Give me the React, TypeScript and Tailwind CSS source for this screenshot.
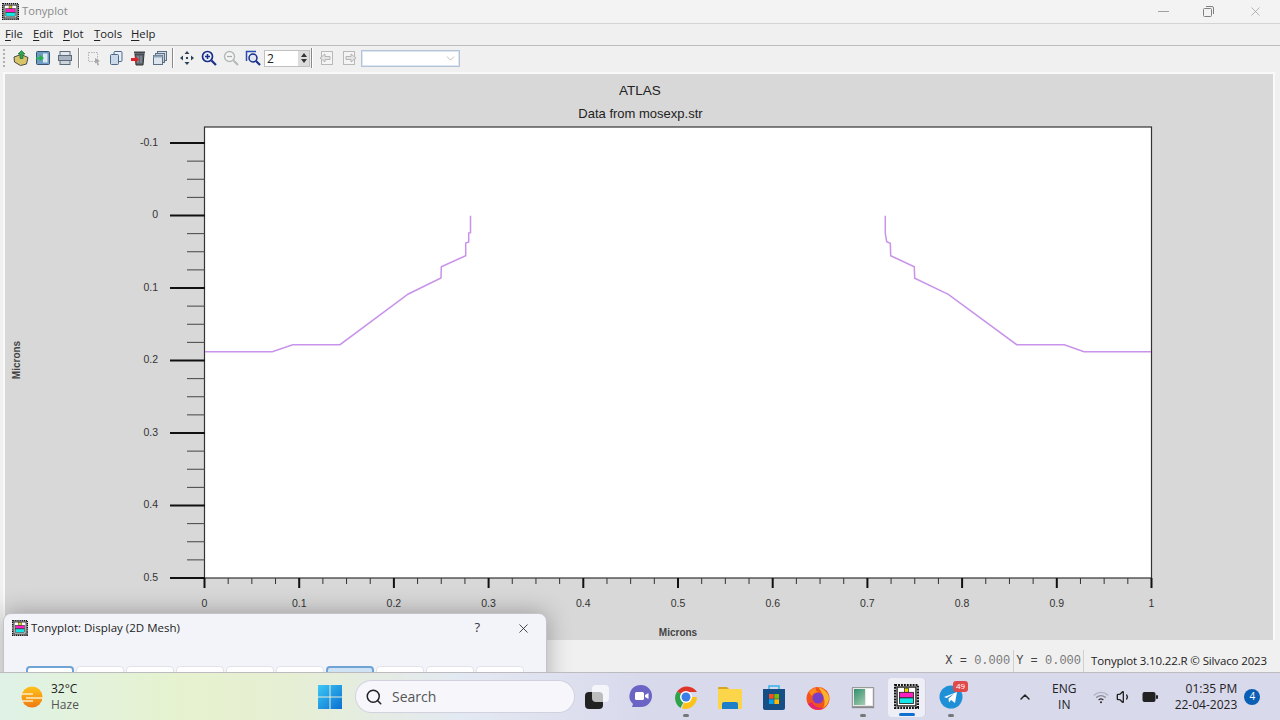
import React from 'react';
import { ChevronDown, ChevronUp, Search, Volume1, X } from 'lucide-react';

const TonyIcon = ({ size = 16 }: { size?: number }) => (
  <svg width={size} height={size} viewBox="0 0 18 18">
    <rect x="0.8" y="0.8" width="16.4" height="16.4" fill="#fff" stroke="#111" strokeWidth="1.6" strokeDasharray="1.4 0.7" />
    <rect x="2.200" y="2.200" width="13.600" height="13.600" fill="#fff" stroke="#222" strokeWidth="1" />
    <rect x="7.5" y="3" width="3" height="3" fill="#e8d400" stroke="#222" strokeWidth="0.5" />
    <rect x="4" y="6" width="10" height="4" fill="#ff1fc0" stroke="#222" strokeWidth="0.6" />
    <rect x="4" y="10" width="10" height="4" fill="#12e6e6" stroke="#222" strokeWidth="0.6" />
  </svg>
);

const toolIcons: React.ReactNode[] = [
  <g key="open">
    <path d="M1 7l7-2.500 7 3-1.500 6.500-6 1.500L1.500 12z" fill="#d8c56a" stroke="#4a4a4a" />
    <path d="M8.500 0.500l3.500 3.500H10v4.500H7V4H5z" fill="#2ea84a" stroke="#1d5c2c" strokeWidth="0.6" />
  </g>,
  <g key="import">
    <rect x="1.500" y="1.500" width="13" height="13" rx="1" fill="#6f9cc4" stroke="#35536e" />
    <rect x="8" y="3.500" width="4.500" height="9" fill="#dbe8f2" />
    <path d="M1 7.500h3.500V4.500l4.500 3.500-4.500 3.500V9H1z" fill="#22b24c" />
  </g>,
  <g key="print">
    <rect x="3" y="1.500" width="10" height="4" fill="#e3e6ea" stroke="#5b6b7c" />
    <rect x="1.500" y="5.500" width="13" height="5" fill="#a9b4c0" stroke="#5b6b7c" />
    <rect x="3" y="10.500" width="10" height="4" fill="#ccd3da" stroke="#5b6b7c" />
  </g>,
  <g key="select">
    <rect x="2.500" y="2.500" width="9" height="9" fill="none" stroke="#b5b5b5" strokeDasharray="1.500 1" />
    <path d="M9 8l5 3-2 1 1 3-1.500 0.500-1-3-1.500 1z" fill="#a8a8a8" />
  </g>,
  <g key="copy">
    <rect x="6" y="1.500" width="8" height="10" rx="1" fill="#e8eef5" stroke="#4c6a88" />
    <rect x="2.500" y="4.500" width="8" height="10" rx="1" fill="#c9d9e8" stroke="#4c6a88" />
  </g>,
  <g key="delete">
    <path d="M5 4h9l-1 11H6z" fill="#5d6670" stroke="#333" />
    <path d="M8 6v7M11 6v7" stroke="#aab2ba" strokeWidth="0.8" />
    <rect x="4" y="1.500" width="11" height="2" fill="#3f454b" />
    <path d="M1 8h4V6l4 3.500L5 13v-2H1z" fill="#d8232a" />
  </g>,
  <g key="cascade">
    <rect x="5.500" y="1.500" width="9" height="9" fill="#d6dde5" stroke="#5b6f84" />
    <rect x="3.500" y="3.500" width="9" height="9" fill="#c3cfdb" stroke="#5b6f84" />
    <rect x="1.500" y="5.500" width="9" height="9" fill="#dde6ee" stroke="#5b6f84" />
    <rect x="1.500" y="5.500" width="9" height="2" fill="#8aa3bb" />
  </g>,
  <g key="move" fill="#2c4258">
    <path d="M8 1l2.500 3h-5zM8 15l-2.500-3h5zM1 8l3-2.500v5zM15 8l-3 2.500v-5z" />
    <rect x="7" y="7" width="2" height="2" />
  </g>,
  <g key="zoomin">
    <circle cx="6.500" cy="6.500" r="5" fill="#e8eef8" stroke="#1b2f8a" strokeWidth="1.700" />
    <path d="M4 6.500h5M6.500 4v5" stroke="#1b2f8a" strokeWidth="1.500" />
    <path d="M10.500 10.500l4.500 4.500" stroke="#1b2f8a" strokeWidth="2.200" />
  </g>,
  <g key="zoomout">
    <circle cx="6.500" cy="6.500" r="5" fill="#f4f4f4" stroke="#b4b8b8" strokeWidth="1.400" />
    <path d="M4 6.500h5" stroke="#a8acac" strokeWidth="1.300" />
    <path d="M10.500 10.500l4.500 4.500" stroke="#b4b8b8" strokeWidth="2" />
  </g>,
  <g key="zoombox">
    <path d="M1.500 11V1.500H11" fill="none" stroke="#2a4bb0" strokeWidth="1.500" />
    <circle cx="8" cy="8" r="4" fill="#dfe6f4" stroke="#1b2f8a" strokeWidth="1.500" />
    <path d="M11 11l4 4" stroke="#1b2f8a" strokeWidth="2.200" />
  </g>,
];

const PageArrow = ({ flip }: { flip?: boolean }) => (
  <svg width="16" height="16" viewBox="0 0 16 16" className={flip ? '-scale-x-100' : ''}>
    <rect x="2.500" y="1.500" width="11" height="13" fill="#f4f4f4" stroke="#b9b9b9" />
    <path d="M1 8l5-4v2.500h5v3H6V12z" fill="#e4e4e4" stroke="#a8a8a8" strokeWidth="0.800" />
  </svg>
);

const ToolButton = ({ icon }: { icon: React.ReactNode }) => (
  <div className="flex h-[22px] w-[22px] items-center justify-center">
    <svg width="16" height="16" viewBox="0 0 16 16">{icon}</svg>
  </div>
);

const ToolSep = ({ className }: { className: string }) => (
  <div className={`h-[20px] w-[2px] border-r border-white bg-[#8a8a8a] ${className}`} />
);

const menus = ['File', 'Edit', 'Plot', 'Tools', 'Help'];
const menuGaps = ['w-[28px]', 'w-[30px]', 'w-[31px]', 'w-[37px]', 'w-[30px]'];

const yMajor = [
  { label: '-0.1', y: 143 },
  { label: '0', y: 215.5 },
  { label: '0.1', y: 288 },
  { label: '0.2', y: 360.5 },
  { label: '0.3', y: 433 },
  { label: '0.4', y: 505.5 },
  { label: '0.5', y: 578 },
];
const xLabels = ['0', '0.1', '0.2', '0.3', '0.4', '0.5', '0.6', '0.7', '0.8', '0.9', '1'];

const leftCurve =
  '205,351.7 272.3,351.7 292.7,344.7 340,344.7 408.3,294 441,278 441.3,266.7 465.7,255.7 465.7,243 468.7,242 468.7,233 470.5,232.7 470.5,215.7';
const rightCurve =
  '885.3,215.7 885.3,233.3 886.7,241.7 890.3,243.3 890.7,255.7 914.3,266.7 914.7,278.3 948.3,294.3 1016.7,344.7 1064.3,344.7 1084,351.7 1151,351.7';

const Chart = () => (
  <svg width="1268" height="566" viewBox="5 74 1268 566" className="block font-['Liberation_Sans',sans-serif]">
    <text x="640" y="95" textAnchor="middle" className="fill-[#222] text-[13.5px]">ATLAS</text>
    <text x="640.5" y="118" textAnchor="middle" className="fill-[#222] text-[13px]">Data from mosexp.str</text>
    <rect x="204.5" y="127" width="947" height="451" fill="#fff" stroke="#333" strokeWidth="1.200" />

    {yMajor.map((t) => (
      <g key={t.label}>
        <line x1="170" x2="205" y1={t.y} y2={t.y} stroke="#111" strokeWidth="2" />
        <text x="158" y={t.y + 2.5} textAnchor="end" className="fill-[#333] text-[10.5px]">{t.label}</text>
      </g>
    ))}
    {Array.from({ length: 24 }, (_, i) => 143 + i * 18.125)
      .filter((_, i) => i % 4 !== 0)
      .map((y) => (
        <line key={y} x1="187" x2="205" y1={y} y2={y} stroke="#444" strokeWidth="1" />
      ))}

    {xLabels.map((label, i) => {
      const x = 204.5 + i * 94.7;
      return (
        <g key={label}>
          <line x1={x} x2={x} y1="578" y2="588" stroke="#111" strokeWidth="2" />
          <text x={x} y="607" textAnchor="middle" className="fill-[#333] text-[10.5px]">{label}</text>
        </g>
      );
    })}
    {Array.from({ length: 40 }, (_, i) => 204.5 + i * 23.675)
      .filter((_, i) => i % 4 !== 0)
      .map((x) => (
        <line key={x} x1={x} x2={x} y1="578" y2="584" stroke="#333" strokeWidth="1" />
      ))}

    <polyline points={leftCurve} fill="none" stroke="#c893ea" strokeWidth="1.500" />
    <polyline points={rightCurve} fill="none" stroke="#c893ea" strokeWidth="1.500" />

    <text x="678" y="635.500" textAnchor="middle" className="fill-[#444] text-[10px] font-bold">Microns</text>
    <text transform="translate(19.500 360) rotate(-90)" textAnchor="middle" className="fill-[#444] text-[10px] font-bold">Microns</text>
  </svg>
);

const AppSlot = ({ children, dot, active }: { children: React.ReactNode; dot?: boolean; active?: boolean }) => (
  <div className="relative flex h-[48px] w-[44.25px] items-center justify-center">
    {active && (
      <div className="absolute top-[5px] left-[3px] h-[39px] w-[37px] rounded bg-[#eeeef6] shadow-[1px_0_0_#cfcfe0]" />
    )}
    <div className="relative">{children}</div>
    {dot && <div className="absolute bottom-[4px] h-[3px] w-[6px] rounded-full bg-[#777]" />}
    {active && <div className="absolute bottom-[5px] h-[3px] w-[16px] rounded-full bg-[#0f6fd0]" />}
  </div>
);

const Taskbar = () => (
  <div className="relative z-20 flex h-[48px] items-center border-t border-[#bcbcc0] bg-[linear-gradient(90deg,#dff2e6_0%,#e6f2cf_14%,#e6efd2_22%,#e3e9f2_36%,#d9d9ec_50%,#d9d9ec_100%)] font-['Open_Sans',sans-serif]">
    <div className="flex w-[318px] items-center pl-[20px]">
      <svg width="24" height="24" viewBox="0 0 24 24">
        <defs>
          <linearGradient id="sun" x1="0" y1="0" x2="0" y2="1">
            <stop offset="0" stopColor="#ffc21a" />
            <stop offset="1" stopColor="#ef7a12" />
          </linearGradient>
        </defs>
        <circle cx="12" cy="12" r="10.500" fill="url(#sun)" />
        <path d="M0 9h13M6 13h18M1 16h12" stroke="#fbeec8" strokeWidth="1.300" />
      </svg>
      <div className="ml-[7px] flex flex-col text-[12px] leading-[16px]">
        <span className="text-[#222]">32°C</span>
        <span className="text-[#555]">Haze</span>
      </div>
    </div>

    <svg width="24" height="24" viewBox="0 0 24 24" className="mr-[14px]">
      <defs>
        <linearGradient id="win" x1="0" y1="0" x2="1" y2="1">
          <stop offset="0" stopColor="#3cc8f5" />
          <stop offset="1" stopColor="#0a6fd0" />
        </linearGradient>
      </defs>
      <path d="M0 0h11.500v11.500H0zM12.500 0H24v11.500H12.500zM0 12.500h11.500V24H0zM12.500 12.500H24V24H12.500z" fill="url(#win)" />
    </svg>

    <div className="flex h-[31px] w-[218px] items-center rounded-full bg-[#f6f6fb] pl-[9px] shadow-[0_0_0_1px_#d2d2de]">
      <Search size={18} strokeWidth={2} className="text-[#222]" />
      <span className="ml-[9px] text-[14px] text-[#555]">Search</span>
    </div>

    <div className="ml-[1px] flex">
      <AppSlot>
        <div className="relative h-[24px] w-[24px]">
          <div className="absolute bottom-0 left-0 h-[17px] w-[18px] rounded-sm bg-[#222]" />
          <div className="absolute top-0 right-0 h-[17px] w-[17px] rounded-sm bg-white/70" />
        </div>
      </AppSlot>
      <AppSlot>
        <svg width="24" height="26" viewBox="0 0 24 26">
          <path d="M12 1a11 11 0 0 1 0 22H3l1-3A11 11 0 0 1 12 1z" fill="#6b64c4" />
          <rect x="6" y="8" width="9" height="8" rx="1.500" fill="#fff" />
          <path d="M16 11l3.500-2v6L16 13z" fill="#fff" />
        </svg>
      </AppSlot>
      <AppSlot dot>
        <svg width="24" height="24" viewBox="0 0 24 24">
          <path d="M12 12L3 6.500A12 12 0 0 1 23 7H12z" fill="#e0352b" />
          <path d="M12 12l-5.500 11A12 12 0 0 1 3 6.500z" fill="#2fa34a" />
          <path d="M12 12h11A12 12 0 0 1 8 23.500z" fill="#fbc21a" />
          <circle cx="12" cy="12" r="6" fill="#fff" />
          <circle cx="12" cy="12" r="4.500" fill="#3c7ee8" />
        </svg>
      </AppSlot>
      <AppSlot>
        <svg width="24" height="24" viewBox="0 0 24 24">
          <path d="M0 3a1 1 0 0 1 1-1h8l2 2H0z" fill="#d9a520" />
          <rect x="0" y="4" width="24" height="20" rx="1" fill="#fdd54a" />
          <path d="M4 24v-5a2 2 0 0 1 2-2h12a2 2 0 0 1 2 2v5z" fill="#1d7fc8" />
        </svg>
      </AppSlot>
      <AppSlot>
        <svg width="24" height="26" viewBox="0 0 24 26">
          <path d="M7 5V2h10v3" fill="none" stroke="#35b4e8" strokeWidth="1.500" />
          <path d="M1 5h22v19a2 2 0 0 1-2 2H3a2 2 0 0 1-2-2z" fill="#164f86" />
          <path d="M7 10h4.700v4.700H7z" fill="#f25022" />
          <path d="M12.300 10H17v4.700h-4.700z" fill="#7fba00" />
          <path d="M7 15.300h4.700V20H7z" fill="#00a4ef" />
          <path d="M12.300 15.300H17V20h-4.700z" fill="#ffb900" />
        </svg>
      </AppSlot>
      <AppSlot>
        <svg width="24" height="26" viewBox="0 0 24 26">
          <circle cx="12" cy="14.500" r="11.500" fill="#f2521e" />
          <path d="M12 3c4 1 11 5 11 11 0 5-3 8-6 10 3-4 2-12-5-21z" fill="#fdb32a" />
          <circle cx="12" cy="14" r="5.500" fill="#7a3fc8" />
          <path d="M3 8c2-3 5-4 7-4-1 2 0 3 3 4-3 0-6 1-7 4-1-1-2-2-3-4z" fill="#ff8a1f" />
          <path d="M2 20a12 12 0 0 0 16 4c-6 0-10-1-12-6z" fill="#e5227a" />
        </svg>
      </AppSlot>
      <AppSlot dot>
        <div className="flex h-[20px] w-[22px] gap-[1px] border border-[#9a9a9a] bg-[#e8e8e8] p-[1px] shadow-[0_1px_1px_#888]">
          <div className="w-[11px] bg-[linear-gradient(135deg,#2e8f6e,#a7cdb0)]" />
          <div className="flex-1 bg-white" />
        </div>
      </AppSlot>
      <AppSlot active>
        <TonyIcon size={25} />
      </AppSlot>
      <AppSlot dot>
        <div className="relative h-[24px] w-[24px]">
          <svg width="24" height="24" viewBox="0 0 24 24">
            <circle cx="12" cy="12" r="11.500" fill="#1f8fd6" />
            <path d="M5 12l13-5-2 11-4-3-2 2.500-.5-4 6-5-8 4.500z" fill="#fff" />
          </svg>
          <div className="absolute -top-[4px] -right-[5px] flex h-[11px] w-[15px] items-center justify-center rounded-[3px] bg-[#e04a4a] text-[8px] leading-none text-white">
            49
          </div>
        </div>
      </AppSlot>
    </div>

    <ChevronUp size={16} strokeWidth={2.2} className="ml-[44px] text-[#222]" />
    <div className="ml-[10px] flex w-[42px] flex-col items-center text-[12px] leading-[16px] text-[#222]">
      <span>ENG</span>
      <span>IN</span>
    </div>
    <svg width="16" height="16" viewBox="0 0 24 24" fill="none" strokeWidth="2" strokeLinecap="round" className="ml-[8px]">
      <path d="M2 9a15 15 0 0 1 20 0" stroke="#b0b0bc" />
      <path d="M5.500 12.500a10 10 0 0 1 13 0" stroke="#8c8c98" />
      <path d="M9 16a5 5 0 0 1 6 0" stroke="#333" />
      <circle cx="12" cy="20" r="1.500" fill="#222" />
    </svg>
    <Volume1 size={16} strokeWidth={2} className="ml-[7px] text-[#222]" />
    <svg width="16" height="12" viewBox="0 0 16 12" className="ml-[10px]">
      <rect x="0.500" y="1" width="13" height="10" rx="2" fill="#222" />
      <rect x="14" y="4" width="2" height="4" rx="1" fill="#222" />
    </svg>
    <div className="ml-[9px] flex w-[70px] flex-col items-end text-[12px] leading-[16px] text-[#222]">
      <span>01:35 PM</span>
      <span>22-04-2023</span>
    </div>
    <div className="ml-[7px] flex h-[16px] w-[16px] items-center justify-center rounded-full bg-[#0a5fb4] text-[10px] text-white">4</div>
  </div>
);

export default function App() {
  return (
    <div className="relative flex h-[720px] w-[1280px] flex-col overflow-hidden bg-[#f0f0f0] font-['Open_Sans',sans-serif]">
      <div className="flex h-[24px] items-center border-b border-[#d4d4d4] bg-[#f3f3f3] pl-[2px]">
        <TonyIcon size={17} />
        <span className="ml-[3px] text-[11.2px] text-[#8a8a8a]">Tonyplot</span>
        <div className="ml-auto flex items-center text-[#8f8f8f]">
          <div className="flex w-[45px] justify-center">
            <div className="h-px w-[11px] bg-[#a0a0a0]" />
          </div>
          <div className="flex w-[45px] justify-center">
            <svg width="11" height="11" viewBox="0 0 11 11" fill="none" stroke="#808080">
              <rect x="0.500" y="2.500" width="8" height="8" rx="1" />
              <path d="M3 .5h6a1.500 1.500 0 0 1 1.500 1.500v6" />
            </svg>
          </div>
          <div className="flex w-[49px] justify-center pr-[1px]">
            <X size={15} strokeWidth={1} />
          </div>
        </div>
      </div>

      <div className="flex h-[22px] items-center border-b border-[#bdbdbd] bg-[#f0f0f0] pl-[5px] text-[11.3px] font-medium text-[#222]">
        {menus.map((m, i) => (
          <div key={m} className={menuGaps[i]}>
            <span className="underline decoration-1 underline-offset-2 [text-decoration-skip-ink:none]">{m[0]}</span>
            {m.slice(1)}
          </div>
        ))}
      </div>

      <div className="flex h-[24px] items-center bg-[#f0f0f0]">
        <div className="ml-[3px] mr-[4px] h-[18px] w-[3px] border-l-2 border-dotted border-[#b0b0b0]" />
        {toolIcons.slice(0, 3).map((icon, i) => <ToolButton key={i} icon={icon} />)}
        <ToolSep className="ml-[2px] mr-[3px]" />
        {toolIcons.slice(3, 7).map((icon, i) => <ToolButton key={i} icon={icon} />)}
        <ToolSep className="ml-[1px] mr-[2px]" />
        {toolIcons.slice(7).map((icon, i) => <ToolButton key={i} icon={icon} />)}
        <div className="flex h-[17px] w-[46px] border border-[#c0c0c0] bg-white">
          <span className="flex-1 pl-[2px] text-[12px] leading-[15px] text-[#222]">2</span>
          <div className="flex w-[11px] flex-col items-center justify-center gap-[2px] bg-[#dcdcdc] text-[#333]">
            <div className="h-0 w-0 border-x-[3px] border-b-[4px] border-x-transparent border-b-[#333]" />
            <div className="h-0 w-0 border-x-[3px] border-t-[4px] border-x-transparent border-t-[#333]" />
          </div>
        </div>
        <ToolSep className="ml-[1px] mr-[3px]" />
        <div className="flex w-[22px] justify-center"><PageArrow /></div>
        <div className="flex w-[22px] justify-center"><PageArrow flip /></div>
        <div className="ml-px flex h-[17px] w-[99px] items-center justify-end border border-[#b5c3d6] bg-white pr-[2px] shadow-[inset_0_0_0_1px_#dce6f2]">
          <ChevronDown size={13} strokeWidth={1} className="text-[#888]" />
        </div>
      </div>

      <div className="ml-[3px] mt-[2px] w-[1272px] border-2 border-b-0 border-[#f9f9f9] bg-[#d8d8d8]">
        <Chart />
      </div>

      <div className="flex h-[32px] items-center justify-end whitespace-nowrap bg-[#f0f0f0] pt-[10px] pr-[13px]">
        <span className="pr-[3px] font-['Liberation_Mono',monospace] text-[12px] text-[#444]">X = <span className="text-[#777]">0.000</span></span>
        <span className="border-l border-[#d0d0d0] px-[2px] font-['Liberation_Mono',monospace] text-[12px] leading-[22px] text-[#444]">Y = <span className="text-[#777]">0.000</span></span>
        <span className="w-[184px] border-l border-[#d0d0d0] pl-[7px] text-[11.5px] leading-[22px] tracking-[-0.14px] text-[#222]">Tonyplot 3.10.22.R © Silvaco 2023</span>
      </div>

      <Taskbar />

      {/* dialog sits over the main window, the taskbar cuts it off */}
      <div className="absolute top-[613px] left-[3px] z-10 h-[90px] w-[544px] rounded-t-lg border border-[#c4c4c8] bg-[#f3f4f9] shadow-[0_0_24px_rgba(0,0,0,0.3)]">
        <div className="flex h-[26px] items-center pt-[2px] pl-[8px]">
          <TonyIcon size={16} />
          <span className="ml-[3px] text-[11.5px] text-[#222]">Tonyplot: Display (2D Mesh)</span>
          <span className="ml-auto text-[13px] text-[#333]">?</span>
          <X size={15} strokeWidth={1.3} className="mr-[15px] ml-[36px] text-[#222]" />
        </div>
        <div className="mt-[26px] flex gap-[2px] pl-[22px]">
          {Array.from({ length: 10 }, (_, i) => (
            <div
              key={i}
              className={
                i === 0
                  ? 'h-[24px] w-[48px] rounded-t border-2 border-[#6fa3d6] bg-white'
                  : i === 6
                    ? 'h-[24px] w-[48px] rounded-t border-2 border-[#6fa3d6] bg-[#cfe3f5]'
                    : 'h-[24px] w-[48px] rounded-t border border-[#e2e2e8] bg-white'
              }
            />
          ))}
        </div>
      </div>
    </div>
  );
}
